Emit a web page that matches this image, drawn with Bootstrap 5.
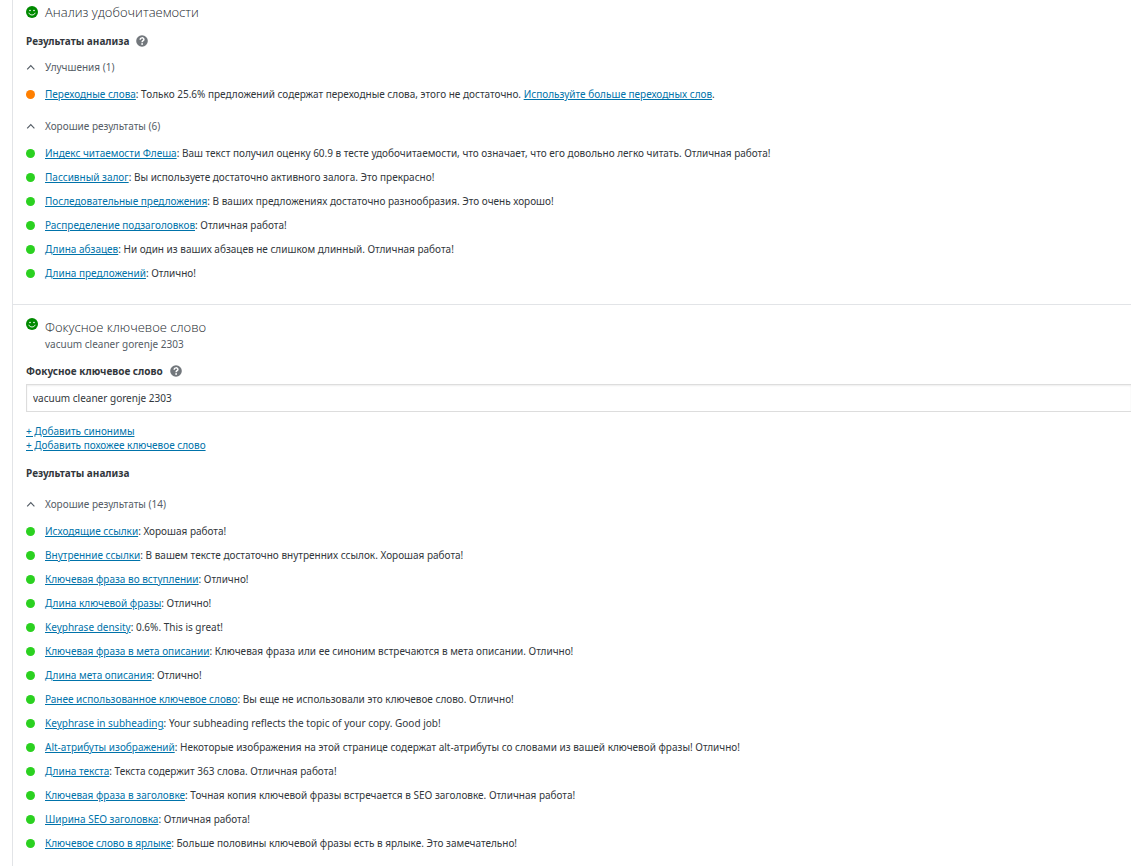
<!DOCTYPE html>
<html lang="ru">
<head>
<meta charset="utf-8">
<meta name="viewport" content="width=device-width, initial-scale=1">
<title>Анализ удобочитаемости</title>
<link href="https://cdn.jsdelivr.net/npm/bootstrap@5.3.0/dist/css/bootstrap.min.css" rel="stylesheet">
<style>
body { font-family: "Noto Sans", "Open Sans", sans-serif; font-size: 10px; line-height: 14px; color: #32373c; background: #fff; }
a { color: #0073aa; }
.seo-panel { margin-left: 12px; border-left: 1px solid #e2e4e7; min-height: 100vh; }
.seo-section { padding-left: 13px; }
.section-first { padding-bottom: 19px; border-bottom: 1px solid #e2e4e7; }
.section-second { padding-top: 12px; }
.section-heading { font-size: 10px; line-height: 14px; font-weight: 400; margin: 0; }
.section-toggle, .group-toggle { color: #555d66; background: none; border: 0; padding: 0; text-align: left; }
.section-toggle { gap: 7px; min-height: 24px; }
.section-second .section-toggle svg { margin-top: 1px; }
.section-title { font-family: "Open Sans", "Noto Sans", sans-serif; font-size: 13px; line-height: 20px; font-weight: 300; color: #23282d; }
.row-label { height: 26px; font-weight: 700; gap: 7px; }
.group-toggle { height: 28px; gap: 10px; padding-bottom: 2px; }
.result-list { margin-bottom: 7px; }
.result-list:last-child { margin-bottom: 0; }
.result-list li { min-height: 24px; gap: 10px; }
.score { width: 9px; height: 9px; border-radius: 50%; background: #2bd120; }
.score-ok { background: #ff7f00; }
.help-btn { width: 12px; height: 12px; }
.keyword-label { margin-top: 7px; }
.key-links { padding-top: 12px; }
.group-spaced { margin-top: 5px; }
.key-input { height: 28px; padding: 0 6px; font-size: 10px; line-height: 14px; color: #32373c; border: 1px solid #ddd; border-right: 0; border-radius: 0; box-shadow: inset 0 1px 2px #00000012; }
</style>
</head>
<body>
<svg class="d-none" aria-hidden="true">
  <symbol id="smile" viewBox="0 0 12 12"><circle cx="6" cy="6" r="6" fill="#008a00"/><circle cx="4" cy="4.5" r=".8" fill="#fff"/><circle cx="8" cy="4.5" r=".8" fill="#fff"/><path d="M2.8 6.8C3.6 9.7 8.4 9.7 9.2 6.8" fill="none" stroke="#fff" stroke-width=".9"/></symbol>
  <symbol id="help" viewBox="0 0 12 12"><circle cx="6" cy="6" r="5.8" fill="#72777c"/><path d="M4.2 4.7C4.2 2.3 7.9 2.3 7.9 4.5C7.9 5.7 6.1 5.7 6.1 7.2" fill="none" stroke="#fff" stroke-width="1.5"/><circle cx="6.1" cy="9" r=".9" fill="#fff"/></symbol>
  <symbol id="up" viewBox="0 0 9 9"><path d="M1.2 6.3L4.8 2.7L8.4 6.3" fill="none" stroke="#555d66" stroke-width="1.2"/></symbol>
</svg>
<main class="seo-panel overflow-hidden">
  <section class="seo-section section-first">
    <h2 class="section-heading mb-1"><button type="button" class="section-toggle d-flex align-items-center w-100" aria-expanded="true">
      <svg width="12" height="12"><use href="#smile"/></svg><span class="section-title">Анализ удобочитаемости</span></button></h2>
    <div class="row-label d-flex align-items-center">Результаты анализа
      <button type="button" class="help-btn btn p-0 border-0 d-flex" aria-label="Справка"><svg width="12" height="12"><use href="#help"/></svg></button></div>
    <button type="button" class="group-toggle d-flex align-items-center" aria-expanded="true"><svg width="9" height="9"><use href="#up"/></svg>Улучшения (1)</button>
    <ul class="result-list list-unstyled">
      <li class="d-flex align-items-center"><span class="score score-ok"></span><span><a href="#">Переходные слова</a>: Только 25.6% предложений содержат переходные слова, этого не достаточно. <a href="#">Используйте больше переходных слов</a>.</span></li>
    </ul>
    <button type="button" class="group-toggle d-flex align-items-center" aria-expanded="true"><svg width="9" height="9"><use href="#up"/></svg>Хорошие результаты (6)</button>
    <ul class="result-list list-unstyled">
      <li class="d-flex align-items-center"><span class="score"></span><span><a href="#">Индекс читаемости Флеша</a>: Ваш текст получил оценку 60.9 в тесте удобочитаемости, что означает, что его довольно легко читать. Отличная работа!</span></li>
      <li class="d-flex align-items-center"><span class="score"></span><span><a href="#">Пассивный залог</a>: Вы используете достаточно активного залога. Это прекрасно!</span></li>
      <li class="d-flex align-items-center"><span class="score"></span><span><a href="#">Последовательные предложения</a>: В ваших предложениях достаточно разнообразия. Это очень хорошо!</span></li>
      <li class="d-flex align-items-center"><span class="score"></span><span><a href="#">Распределение подзаголовков</a>: Отличная работа!</span></li>
      <li class="d-flex align-items-center"><span class="score"></span><span><a href="#">Длина абзацев</a>: Ни один из ваших абзацев не слишком длинный. Отличная работа!</span></li>
      <li class="d-flex align-items-center"><span class="score"></span><span><a href="#">Длина предложений</a>: Отлично!</span></li>
    </ul>
  </section>
  <section class="seo-section section-second">
    <h2 class="section-heading"><button type="button" class="section-toggle d-flex align-items-start w-100" aria-expanded="true">
      <svg width="12" height="12"><use href="#smile"/></svg><span><span class="section-title d-block">Фокусное ключевое слово</span><span class="d-block">vacuum cleaner gorenje 2303</span></span></button></h2>
    <div class="row-label keyword-label d-flex align-items-center"><label for="keyword">Фокусное ключевое слово</label>
      <button type="button" class="help-btn btn p-0 border-0 d-flex" aria-label="Справка"><svg width="12" height="12"><use href="#help"/></svg></button></div>
    <input id="keyword" type="text" class="key-input form-control" value="vacuum cleaner gorenje 2303">
    <div class="key-links d-flex flex-column align-items-start">
      <a href="#">+ Добавить синонимы</a>
      <a href="#">+ Добавить похожее ключевое слово</a>
    </div>
    <div class="row-label d-flex align-items-center mt-2">Результаты анализа</div>
    <button type="button" class="group-toggle group-spaced d-flex align-items-center" aria-expanded="true"><svg width="9" height="9"><use href="#up"/></svg>Хорошие результаты (14)</button>
    <ul class="result-list list-unstyled">
      <li class="d-flex align-items-center"><span class="score"></span><span><a href="#">Исходящие ссылки</a>: Хорошая работа!</span></li>
      <li class="d-flex align-items-center"><span class="score"></span><span><a href="#">Внутренние ссылки</a>: В вашем тексте достаточно внутренних ссылок. Хорошая работа!</span></li>
      <li class="d-flex align-items-center"><span class="score"></span><span><a href="#">Ключевая фраза во вступлении</a>: Отлично!</span></li>
      <li class="d-flex align-items-center"><span class="score"></span><span><a href="#">Длина ключевой фразы</a>: Отлично!</span></li>
      <li class="d-flex align-items-center"><span class="score"></span><span><a href="#">Keyphrase density</a>: 0.6%. This is great!</span></li>
      <li class="d-flex align-items-center"><span class="score"></span><span><a href="#">Ключевая фраза в мета описании</a>: Ключевая фраза или ее синоним встречаются в мета описании. Отлично!</span></li>
      <li class="d-flex align-items-center"><span class="score"></span><span><a href="#">Длина мета описания</a>: Отлично!</span></li>
      <li class="d-flex align-items-center"><span class="score"></span><span><a href="#">Ранее использованное ключевое слово</a>: Вы еще не использовали это ключевое слово. Отлично!</span></li>
      <li class="d-flex align-items-center"><span class="score"></span><span><a href="#">Keyphrase in subheading</a>: Your subheading reflects the topic of your copy. Good job!</span></li>
      <li class="d-flex align-items-center"><span class="score"></span><span><a href="#">Alt-атрибуты изображений</a>: Некоторые изображения на этой странице содержат alt-атрибуты со словами из вашей ключевой фразы! Отлично!</span></li>
      <li class="d-flex align-items-center"><span class="score"></span><span><a href="#">Длина текста</a>: Текста содержит 363 слова. Отличная работа!</span></li>
      <li class="d-flex align-items-center"><span class="score"></span><span><a href="#">Ключевая фраза в заголовке</a>: Точная копия ключевой фразы встречается в SEO заголовке. Отличная работа!</span></li>
      <li class="d-flex align-items-center"><span class="score"></span><span><a href="#">Ширина SEO заголовка</a>: Отличная работа!</span></li>
      <li class="d-flex align-items-center"><span class="score"></span><span><a href="#">Ключевое слово в ярлыке</a>: Больше половины ключевой фразы есть в ярлыке. Это замечательно!</span></li>
    </ul>
  </section>
</main>
<script src="https://cdn.jsdelivr.net/npm/bootstrap@5.3.0/dist/js/bootstrap.bundle.min.js"></script>
</body>
</html>
